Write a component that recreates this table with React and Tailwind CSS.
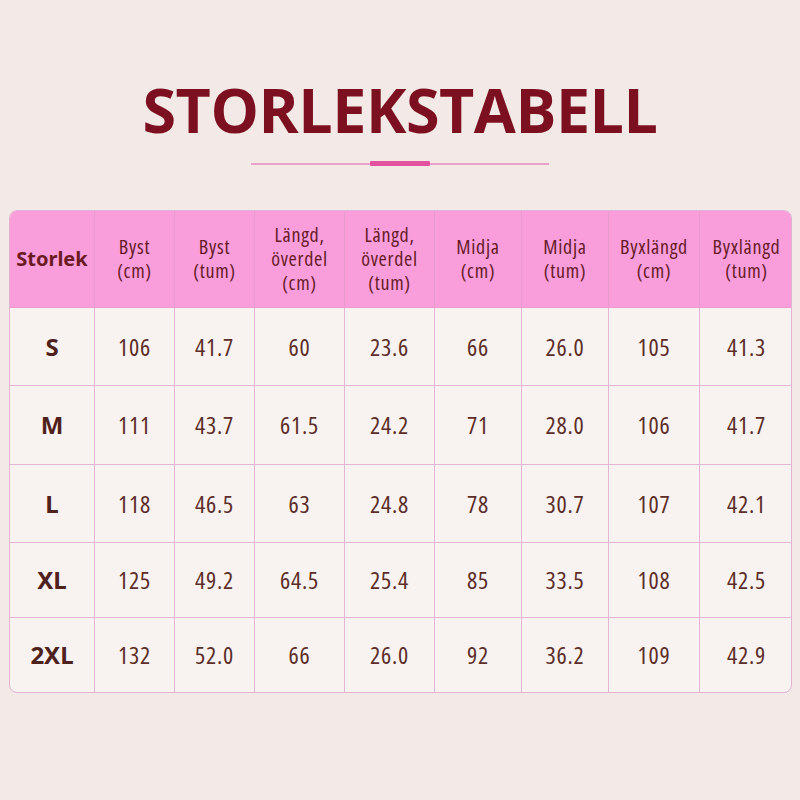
const headers = [
  ["Storlek"],
  ["Byst", "(cm)"],
  ["Byst", "(tum)"],
  ["Längd,", "överdel", "(cm)"],
  ["Längd,", "överdel", "(tum)"],
  ["Midja", "(cm)"],
  ["Midja", "(tum)"],
  ["Byxlängd", "(cm)"],
  ["Byxlängd", "(tum)"],
];

const rows = [
  { size: "S", h: "h-[78px]", values: ["106", "41.7", "60", "23.6", "66", "26.0", "105", "41.3"] },
  { size: "M", h: "h-[79px]", values: ["111", "43.7", "61.5", "24.2", "71", "28.0", "106", "41.7"] },
  { size: "L", h: "h-[78px]", values: ["118", "46.5", "63", "24.8", "78", "30.7", "107", "42.1"] },
  { size: "XL", h: "h-[75px]", values: ["125", "49.2", "64.5", "25.4", "85", "33.5", "108", "42.5"] },
  { size: "2XL", h: "h-[74px]", values: ["132", "52.0", "66", "26.0", "92", "36.2", "109", "42.9"] },
];

const cols = "grid grid-cols-[84px_80px_80px_90px_90px_87px_87px_91px_94px]";

export default function App() {
  return (
    <div className="w-[800px] h-[800px] bg-[#f3e9e6] font-['Open_Sans',sans-serif] overflow-hidden">
      <div className="pt-[76px] flex flex-col items-center">
        <h1 className="text-[61px] leading-[68px] font-bold text-[#7d1020] tracking-[-0.5px]">
          STORLEKSTABELL
        </h1>
        <div className="mt-[17px] flex items-center w-[298px]">
          <div className="flex-1 h-[2px] bg-[#e9a0c9]" />
          <div className="w-[60px] h-[5px] rounded-[1px] bg-[#e3529f]" />
          <div className="flex-1 h-[2px] bg-[#e9a0c9]" />
        </div>
      </div>

      <div className="mt-[44px] ml-[9px] w-[783px] rounded-[8px] overflow-hidden border border-[#e2b3d2] bg-[#f8f3f0] text-[#5c2d28]">
        <div className={`${cols} h-[97px] bg-[#fa9edb] border-b border-[#e79ccb]`}>
          {headers.map((lines, i) => (
            <div
              key={i}
              className={`flex flex-col items-center justify-center text-center leading-[24px] ${
                i > 0 ? "border-l border-[#e79ccb]" : ""
              } ${
                i === 0
                  ? "text-[20px] font-bold text-[#6b1a22] font-['Noto_Sans',sans-serif] font-stretch-semi-condensed"
                  : "text-[20px] text-[#661c28] font-stretch-condensed tracking-[0.7px]"
              }`}
            >
              {lines.map((l) => (
                <span key={l}>{l}</span>
              ))}
            </div>
          ))}
        </div>
        {rows.map((row, r) => (
          <div key={row.size} className={`${cols} ${row.h} ${r < rows.length - 1 ? "border-b border-[#e2b6d4]" : ""}`}>
            <div className="flex items-center justify-center text-[24px] font-bold text-[#4f211c] font-['Noto_Sans',sans-serif] font-stretch-semi-condensed">
              {row.size}
            </div>
            {row.values.map((v, i) => (
              <div
                key={i}
                className="flex items-center justify-center border-l border-[#e2b6d4] text-[24px] font-stretch-condensed tracking-[0.8px]"
              >
                {v}
              </div>
            ))}
          </div>
        ))}
      </div>
    </div>
  );
}
